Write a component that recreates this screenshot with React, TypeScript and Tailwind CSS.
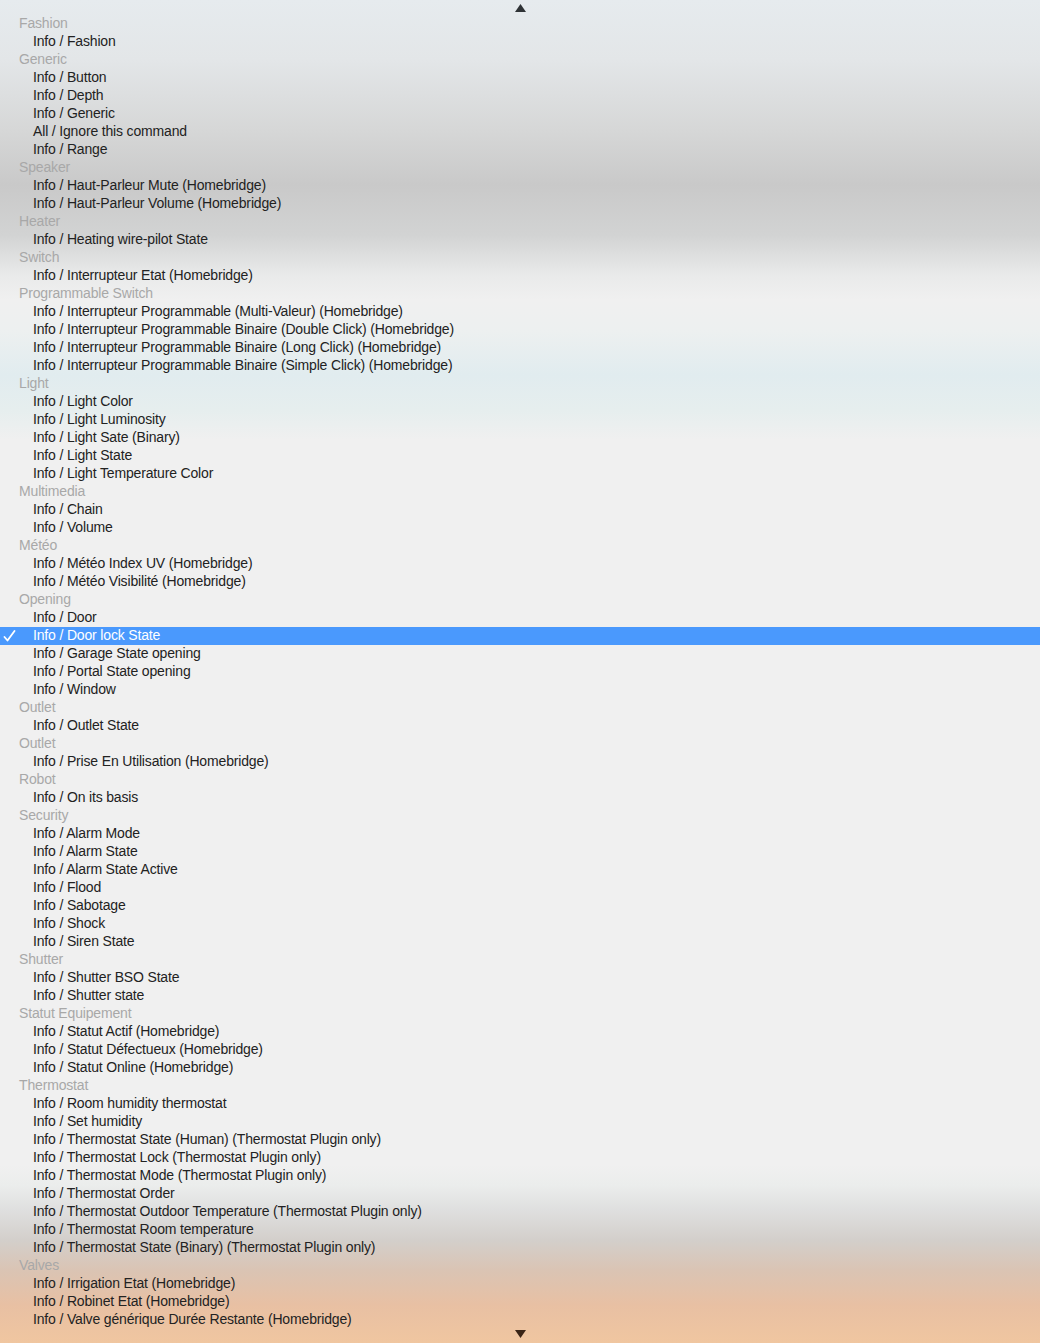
import { ReactNode } from "react";

type Entry = { group: string; items: string[] };

const entries: Entry[] = [
  { group: "Fashion", items: ["Info / Fashion"] },
  { group: "Generic", items: ["Info / Button", "Info / Depth", "Info / Generic", "All / Ignore this command", "Info / Range"] },
  { group: "Speaker", items: ["Info / Haut-Parleur Mute (Homebridge)", "Info / Haut-Parleur Volume (Homebridge)"] },
  { group: "Heater", items: ["Info / Heating wire-pilot State"] },
  { group: "Switch", items: ["Info / Interrupteur Etat (Homebridge)"] },
  {
    group: "Programmable Switch",
    items: [
      "Info / Interrupteur Programmable (Multi-Valeur) (Homebridge)",
      "Info / Interrupteur Programmable Binaire (Double Click) (Homebridge)",
      "Info / Interrupteur Programmable Binaire (Long Click) (Homebridge)",
      "Info / Interrupteur Programmable Binaire (Simple Click) (Homebridge)",
    ],
  },
  { group: "Light", items: ["Info / Light Color", "Info / Light Luminosity", "Info / Light Sate (Binary)", "Info / Light State", "Info / Light Temperature Color"] },
  { group: "Multimedia", items: ["Info / Chain", "Info / Volume"] },
  { group: "Météo", items: ["Info / Météo Index UV (Homebridge)", "Info / Météo Visibilité (Homebridge)"] },
  { group: "Opening", items: ["Info / Door", "Info / Door lock State", "Info / Garage State opening", "Info / Portal State opening", "Info / Window"] },
  { group: "Outlet", items: ["Info / Outlet State"] },
  { group: "Outlet", items: ["Info / Prise En Utilisation (Homebridge)"] },
  { group: "Robot", items: ["Info / On its basis"] },
  { group: "Security", items: ["Info / Alarm Mode", "Info / Alarm State", "Info / Alarm State Active", "Info / Flood", "Info / Sabotage", "Info / Shock", "Info / Siren State"] },
  { group: "Shutter", items: ["Info / Shutter BSO State", "Info / Shutter state"] },
  { group: "Statut Equipement", items: ["Info / Statut Actif (Homebridge)", "Info / Statut Défectueux (Homebridge)", "Info / Statut Online (Homebridge)"] },
  {
    group: "Thermostat",
    items: [
      "Info / Room humidity thermostat",
      "Info / Set humidity",
      "Info / Thermostat State (Human) (Thermostat Plugin only)",
      "Info / Thermostat Lock (Thermostat Plugin only)",
      "Info / Thermostat Mode (Thermostat Plugin only)",
      "Info / Thermostat Order",
      "Info / Thermostat Outdoor Temperature (Thermostat Plugin only)",
      "Info / Thermostat Room temperature",
      "Info / Thermostat State (Binary) (Thermostat Plugin only)",
    ],
  },
  { group: "Valves", items: ["Info / Irrigation Etat (Homebridge)", "Info / Robinet Etat (Homebridge)", "Info / Valve générique Durée Restante (Homebridge)"] },
];

const selected = "Info / Door lock State";

const Check = () => (
  <svg width="13" height="12" viewBox="0 0 13 12" className="absolute left-[3px] top-[3px]">
    <path d="M1.5 7 L4.5 10.5 L11.5 1" fill="none" stroke="white" strokeWidth="1.8" strokeLinecap="round" strokeLinejoin="round" />
  </svg>
);

const Row = ({ children, active }: { children: ReactNode; active?: boolean }) => (
  <div className={`relative h-[18px] leading-[17px] pl-[33px] whitespace-nowrap ${active ? "bg-[#4a99fd] text-white" : "text-[#222222]"}`}>
    {active && <Check />}
    {children}
  </div>
);

const App = () => {
  return (
    <div className="relative h-[1343px] w-[1040px] overflow-hidden bg-[linear-gradient(to_bottom,#e6ebee_0px,#e3e6e8_60px,#d6d7d7_130px,#c9c9c9_185px,#d2d3d3_235px,#e9eaea_275px,#f0f0f0_300px,#edf0f0_330px,#e1ecef_375px,#e6eeee_410px,#f0f0f0_440px,#f0f0f0_1165px,#ebedec_1185px,#dfdfdf_1210px,#d3cfcb_1240px,#dac4b4_1270px,#e8c0a3_1305px,#f0c6a0_1343px)] font-['Liberation_Sans',Arial,sans-serif] text-[14px] tracking-[-0.16px]">
      <div className="flex justify-center pt-[4px]">
        <svg width="11" height="8" viewBox="0 0 11 8">
          <path d="M5.5 0 L11 8 L0 8 Z" fill="#2f3336" />
        </svg>
      </div>
      <div className="absolute left-0 right-0 top-[15px] h-[1312px] overflow-hidden">
        {entries.map((e, i) => (
          <div key={i}>
            <div className="h-[18px] leading-[17px] pl-[19px] text-[#a8a8a8]">{e.group}</div>
            {e.items.map((it) => (
              <Row key={it} active={it === selected}>
                {it}
              </Row>
            ))}
          </div>
        ))}
      </div>
      <div className="absolute bottom-[5px] left-0 right-0 flex justify-center">
        <svg width="11" height="8" viewBox="0 0 11 8">
          <path d="M0 0 L11 0 L5.5 8 Z" fill="#3a2416" />
        </svg>
      </div>
    </div>
  );
};

export default App;
